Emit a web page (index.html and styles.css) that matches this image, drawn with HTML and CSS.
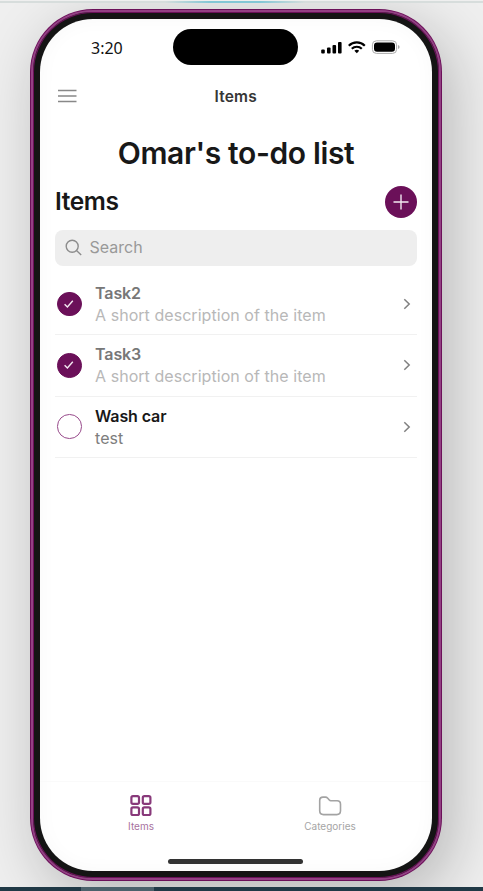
FILE: index.html
```
<!DOCTYPE html>
<html lang="en">
    <head>
        <meta charset="utf-8">
        <meta name="viewport" content="width=device-width, initial-scale=1">
        <title>Items</title>
        <link rel="stylesheet" href="styles.css">
    </head>
    <body>
        <div class="topline"></div>
        <div class="stage">
            <div class="phone">
                <div class="bezel">
                    <div class="screen">

                        <!-- status bar -->
                        <div class="status">
                            <span class="clock">3:20</span>
                            <div class="island"></div>
                            <svg class="signals" width="82" height="16" viewBox="0 0 82 16">
                                <g fill="#000">
                                    <rect x="1.2" y="10.4" width="3.6" height="4" rx="1"/>
                                    <rect x="7" y="8.4" width="3.6" height="6" rx="1"/>
                                    <rect x="12.5" y="6" width="3.6" height="8.4" rx="1"/>
                                    <rect x="18" y="3" width="3.6" height="11.4" rx="1"/>
                                    <path d="M34.4 11.8a3.2 3.2 0 0 1 4.8 0l-2.4 2.4z"/>
                                    <rect x="54" y="3.4" width="21" height="9.4" rx="3"/>
                                </g>
                                <g fill="none" stroke="#000" stroke-width="2.2">
                                    <path d="M28.8 6.7a11.4 11.4 0 0 1 16 0"/>
                                    <path d="M31.8 9.8a7.1 7.1 0 0 1 10 0"/>
                                </g>
                                <rect x="52.4" y="1.8" width="24.2" height="12.6" rx="4" fill="none" stroke="#aaa" stroke-width="1"/>
                                <path d="M78.2 6v4q1.3-.7 1.3-2t-1.3-2z" fill="#999"/>
                            </svg>
                        </div>

                        <!-- nav bar -->
                        <div class="nav">
                            <svg class="burger" width="19" height="14" viewBox="0 0 19 14">
                                <path d="M0 1.5h18.5M0 7h18.5M0 12.5h18.5" stroke="#888" stroke-width="1.5"/>
                            </svg>
                            <span>Items</span>
                        </div>

                        <div class="content">
                            <h1>Omar's to-do list</h1>
                            <div class="heading">
                                <h2>Items</h2>
                                <div class="add">
                                    <svg width="16" height="16" viewBox="0 0 16 16">
                                        <path d="M8 .5v15M.5 8h15" stroke="#f3e9f1" stroke-width="1.4"/>
                                    </svg>
                                </div>
                            </div>
                            <div class="search">
                                <svg width="17" height="17" viewBox="0 0 17 17" fill="none" stroke="#8d8d8d" stroke-width="1.4">
                                    <circle cx="7.2" cy="7.2" r="6"/>
                                    <path d="M11.5 11.5l4.7 4.4"/>
                                </svg>
                                <span>Search</span>
                            </div>

                            <div class="item done">
                                <div class="check">
                                    <svg width="12" height="10" viewBox="0 0 12 10"><path d="M1.6 5.2l2.8 2.8 5.4-6.2" fill="none" stroke="#f3e9f1" stroke-width="1.4"/></svg>
                                </div>
                                <div class="text">
                                    <div class="name">Task2</div>
                                    <div class="desc">A short description of the item</div>
                                </div>
                                <svg class="arrow" width="8" height="12" viewBox="0 0 8 12"><path d="M1.3 1.2L6.2 6l-4.9 4.8" fill="none" stroke="#808080" stroke-width="1.5"/></svg>
                            </div>
                            <div class="item done">
                                <div class="check">
                                    <svg width="12" height="10" viewBox="0 0 12 10"><path d="M1.6 5.2l2.8 2.8 5.4-6.2" fill="none" stroke="#f3e9f1" stroke-width="1.4"/></svg>
                                </div>
                                <div class="text">
                                    <div class="name">Task3</div>
                                    <div class="desc">A short description of the item</div>
                                </div>
                                <svg class="arrow" width="8" height="12" viewBox="0 0 8 12"><path d="M1.3 1.2L6.2 6l-4.9 4.8" fill="none" stroke="#808080" stroke-width="1.5"/></svg>
                            </div>
                            <div class="item">
                                <div class="check"></div>
                                <div class="text">
                                    <div class="name">Wash car</div>
                                    <div class="desc">test</div>
                                </div>
                                <svg class="arrow" width="8" height="12" viewBox="0 0 8 12"><path d="M1.3 1.2L6.2 6l-4.9 4.8" fill="none" stroke="#808080" stroke-width="1.5"/></svg>
                            </div>
                        </div>

                        <!-- bottom tabs -->
                        <div class="tabs">
                            <div class="tab active">
                                <svg width="22" height="22" viewBox="0 0 22 22" fill="none" stroke="#88397a" stroke-width="2.2">
                                    <rect x="1.4" y="1.2" width="7.6" height="7.6" rx="1.6"/>
                                    <rect x="12.8" y="1.2" width="7.6" height="7.6" rx="1.6"/>
                                    <rect x="1.4" y="12.4" width="7.6" height="7.6" rx="1.6"/>
                                    <rect x="12.8" y="12.4" width="7.6" height="7.6" rx="1.6"/>
                                </svg>
                                <span>Items</span>
                            </div>
                            <div class="tab">
                                <svg width="24" height="22" viewBox="0 0 24 22" fill="none" stroke="#a3a3a3" stroke-width="1.6">
                                    <path d="M1.7 5.4q0-3.3 3.3-3.3h2.5q1.2 0 2 .9l1.8 2.1q.6.7 1.5.7h6.3q3.4 0 3.4 3.4v6.6q0 3.8-3.8 3.8H5.5q-3.8 0-3.8-3.8z"/>
                                </svg>
                                <span>Categories</span>
                            </div>
                        </div>
                        <div class="home"></div>
                    </div>
                </div>
            </div>
        </div>
        <div class="taskbar"><div class="taskitem"></div></div>
    </body>
</html>
```
FILE: styles.css
```
/* page */
* {
    box-sizing:         border-box;
}
body {
    display:            flex;
    flex-direction:     column;
    height:             891px;
    margin:             0;
    overflow:           hidden;
    background:         #efefef;
    font-family:        Inter, "Liberation Sans", sans-serif;
    color:              #181818;
}
.topline {
    height:             2px;
    margin-top:         1px;
    background:         linear-gradient(90deg, #d7dddc 165px, #83c7d5 210px, #83c7d5 260px, #d7dddc 305px);
}
.stage {
    flex:               1;
    padding:            6px 0 0 30px;
    overflow:           hidden;
}
.taskbar {
    height:             4px;
    padding-left:       81px;
    background:         #203946;
}
.taskitem {
    width:              73px;
    height:             4px;
    background:         #4b616b;
}

/* phone shell */
.phone {
    width:              412px;
    height:             872px;
    padding:            1px;
    border-radius:      63px;
    background:         #6b1059;
    box-shadow:         10px 16px 60px rgba(0, 0, 0, .24);
}
.bezel {
    height:             100%;
    padding:            7px;
    border:             2px solid #934084;
    border-radius:      62px;
    background:         #141414;
    box-shadow:         inset 0 0 0 1px #6b1059;
}
.screen {
    display:            flex;
    flex-direction:     column;
    height:             852px;
    overflow:           hidden;
    border-radius:      53px;
    background:         #fff;
    box-shadow:         inset 0 0 20px rgba(0, 0, 0, .03);
}

/* status bar and nav */
.status {
    display:            flex;
    height:             56px;
    padding:            10px 30px 0 51px;
}
.clock {
    width:              82px;
    padding-top:        8px;
    font:               16px/22px "Noto Sans", sans-serif;
    color:              #111;
}
.island {
    width:              125px;
    height:             36px;
    border-radius:      18px;
    background:         #000;
}
.signals {
    margin:             10px 0 0 22px;
}
.nav {
    display:            grid;
    grid-template-columns: 19px 1fr 19px;
    align-items:        center;
    height:             42px;
    padding:            0 18px 0 17.5px;
    font-size:          15.5px;
    font-weight:        600;
    letter-spacing:     .2px;
    text-align:         center;
    color:              #363636;
}

/* content */
.content {
    flex:               1;
    padding:            16px 15px 0;
}
h1, h2 {
    margin:             0;
    font-weight:        600;
}
h1 {
    font-size:          30px;
    line-height:        40px;
    letter-spacing:     -.36px;
    text-align:         center;
}
.heading {
    display:            flex;
    align-items:        center;
    justify-content:    space-between;
    height:             32px;
    margin-top:         12.5px;
}
h2 {
    padding-bottom:     1px;
    font-size:          24.5px;
    letter-spacing:     -.4px;
}
.add {
    display:            flex;
    align-items:        center;
    justify-content:    center;
    width:              32px;
    height:             32px;
    border-radius:      50%;
    background:         #6b1059;
}
.search {
    display:            flex;
    align-items:        center;
    gap:                8px;
    height:             36px;
    margin:             12px 0 8.5px;
    padding:            0 9.5px 1px;
    border-radius:      8px;
    background:         #eee;
    font-size:          16px;
    color:              #999;
}
.item {
    display:            flex;
    align-items:        center;
    height:             61.3px;
    padding:            0 6px 0 2px;
    border-bottom:      1px solid #f1f1f1;
}
.check {
    display:            flex;
    align-items:        center;
    justify-content:    center;
    width:              24.5px;
    height:             24.5px;
    border:             1px solid #984a8b;
    border-radius:      50%;
}
.done .check {
    border-color:       #6b1059;
    background:         #6b1059;
}
.text {
    flex:               1;
    padding-left:       13.5px;
    line-height:        22px;
    font-size:          16px;
}
.name {
    font-weight:        600;
    letter-spacing:     -.1px;
}
.desc {
    letter-spacing:     .05px;
    color:              #7d7d7d;
}
.done .name {
    color:              #777;
}
.done .desc {
    color:              #b8b8b8;
}

/* tabs */
.tabs {
    display:            flex;
    height:             60px;
    padding:            0 7.5px 0 6.5px;
    border-top:         1px solid #fafafa;
}
.tab {
    flex:               1;
    display:            flex;
    flex-direction:     column;
    align-items:        center;
    padding-top:        13px;
    font-size:          10px;
    line-height:        12px;
    color:              #a5a5a5;
}
.tab span {
    margin-top:         3px;
}
.active {
    color:              #a772a0;
}
.home {
    width:              135px;
    height:             5px;
    margin:             18px 129px 7px 128px;
    border-radius:      3px;
    background:         #333;
}
```
